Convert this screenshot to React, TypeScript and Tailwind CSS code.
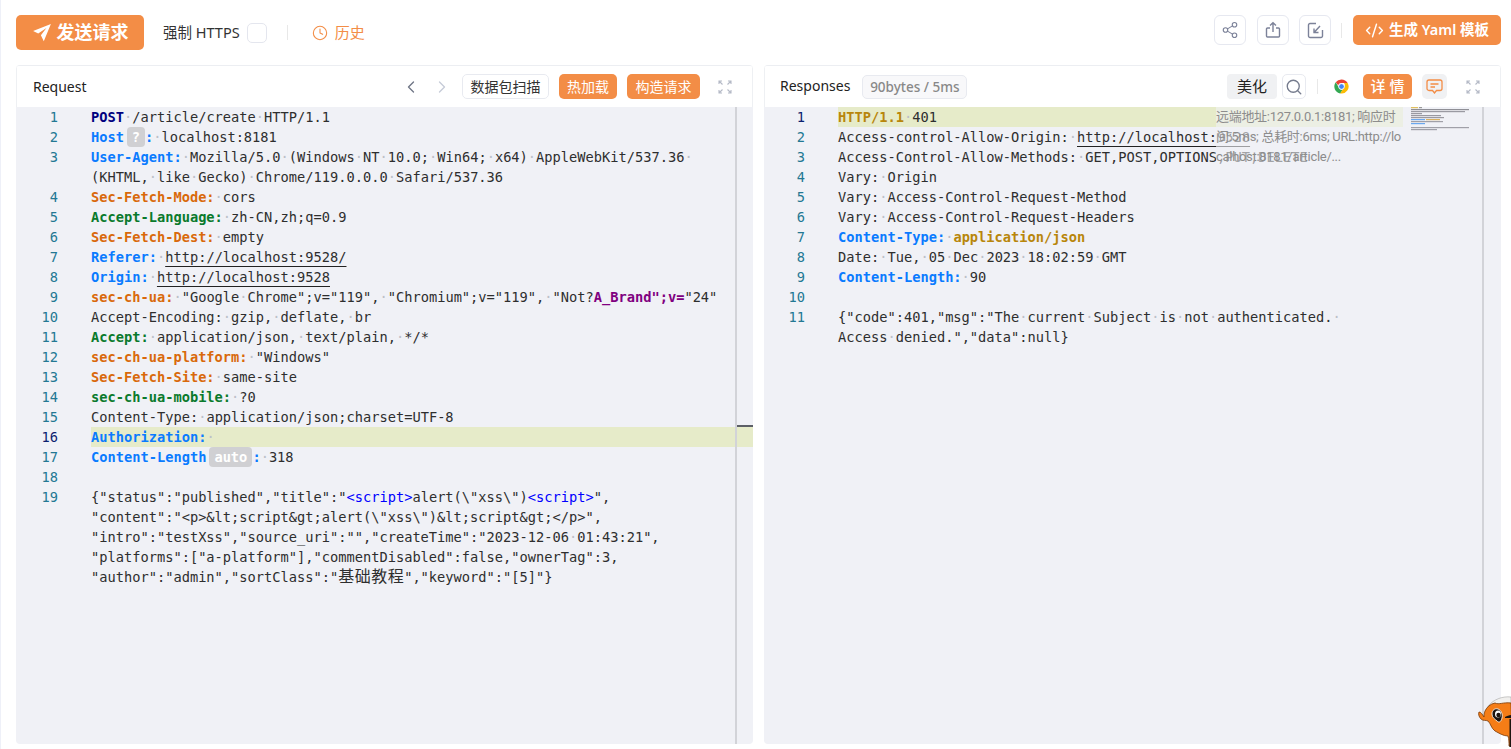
import React from "react";
import { ChevronLeft, ChevronRight, Share2, Search, Clock, CodeXml } from "lucide-react";

type Seg = [string, string?];
type Row = { n?: number; segs: Seg[]; active?: boolean };

const B = "text-[#0a7bff] font-bold";
const O = "text-[#d9690b] font-bold";
const G = "text-[#0a7a2c] font-bold";
const U = "underline underline-offset-[4px] decoration-[#222]";

const reqRows: Row[] = [
  { n: 1, segs: [["POST", "text-[#00007f] font-bold"], [" /article/create HTTP/1.1"]] },
  { n: 2, segs: [["Host", B], ["?", "badge"], [":", B], [" localhost:8181"]] },
  { n: 3, segs: [["User-Agent:", B], [" Mozilla/5.0 (Windows NT 10.0; Win64; x64) AppleWebKit/537.36 "]] },
  { segs: [["(KHTML, like Gecko) Chrome/119.0.0.0 Safari/537.36"]] },
  { n: 4, segs: [["Sec-Fetch-Mode:", O], [" cors"]] },
  { n: 5, segs: [["Accept-Language:", G], [" zh-CN,zh;q=0.9"]] },
  { n: 6, segs: [["Sec-Fetch-Dest:", O], [" empty"]] },
  { n: 7, segs: [["Referer:", B], [" "], ["http://localhost:9528/", U]] },
  { n: 8, segs: [["Origin:", B], [" "], ["http://localhost:9528", U]] },
  { n: 9, segs: [["sec-ch-ua:", O], [' "Google Chrome";v="119", "Chromium";v="119", "Not?'], ['A_Brand";v=', "text-[#800080] font-bold"], ['"24"']] },
  { n: 10, segs: [["Accept-Encoding: gzip, deflate, br"]] },
  { n: 11, segs: [["Accept:", G], [" application/json, text/plain, */*"]] },
  { n: 12, segs: [["sec-ch-ua-platform:", O], [' "Windows"']] },
  { n: 13, segs: [["Sec-Fetch-Site:", O], [" same-site"]] },
  { n: 14, segs: [["sec-ch-ua-mobile:", G], [" ?0"]] },
  { n: 15, segs: [["Content-Type: application/json;charset=UTF-8"]] },
  { n: 16, active: true, segs: [["Authorization:", B], [" "]] },
  { n: 17, segs: [["Content-Length", B], ["auto", "badge"], [":", B], [" 318"]] },
  { n: 18, segs: [] },
  { n: 19, segs: [['{"status":"published","title":"'], ["<script>", "text-[#0000ff]"], ['alert(\\"xss\\")'], ["<script>", "text-[#0000ff]"], ['",']] },
  { segs: [['"content":"<p>&lt;script&gt;alert(\\"xss\\")&lt;script&gt;</p>",']] },
  { segs: [['"intro":"testXss","source_uri":"","createTime":"2023-12-06 01:43:21",']] },
  { segs: [['"platforms":["a-platform"],"commentDisabled":false,"ownerTag":3,']] },
  { segs: [['"author":"admin","sortClass":"'], ["基础教程", "cjk"], ['","keyword":"[5]"}']] },
];

const resRows: Row[] = [
  { n: 1, active: true, segs: [["HTTP/1.1", "text-[#b8860b] font-bold"], [" 401"]] },
  { n: 2, segs: [["Access-control-Allow-Origin: "], ["http://localhost:9528", U]] },
  { n: 3, segs: [["Access-Control-Allow-Methods: GET,POST,OPTIONS,PUT,DELETE"]] },
  { n: 4, segs: [["Vary: Origin"]] },
  { n: 5, segs: [["Vary: Access-Control-Request-Method"]] },
  { n: 6, segs: [["Vary: Access-Control-Request-Headers"]] },
  { n: 7, segs: [["Content-Type:", B], [" "], ["application/json", "text-[#b8860b] font-bold"]] },
  { n: 8, segs: [["Date: Tue, 05 Dec 2023 18:02:59 GMT"]] },
  { n: 9, segs: [["Content-Length:", B], [" 90"]] },
  { n: 10, segs: [] },
  { n: 11, segs: [['{"code":401,"msg":"The current Subject is not authenticated. ']] },
  { segs: [['Access denied.","data":null}']] },
];

function SegView({ seg }: { seg: Seg }) {
  const [text, cls] = seg;
  if (cls === "badge") {
    return (
      <span
        className={`inline-block align-top ml-[3px] bg-[#d0d0d3] text-white font-bold rounded-[4px] text-center h-[20px] leading-[20px] ${
          text === "?" ? "w-[18px]" : "w-[43px]"
        }`}
      >
        {text}
      </span>
    );
  }
  if (cls === "cjk") {
    return <span className="text-[16px] tracking-[0.48px]">{text}</span>;
  }
  const parts = text.split(" ");
  return (
    <span className={cls}>
      {parts.map((p, i) => (
        <React.Fragment key={i}>
          {i > 0 && <span className="text-[#bcc0c8] font-normal no-underline">·</span>}
          {p}
        </React.Fragment>
      ))}
    </span>
  );
}

function Code({ rows, gutter, activeEnd }: { rows: Row[]; gutter: string; activeEnd: string }) {
  return (
    <div>
      {rows.map((r, i) => (
        <div key={i} className="flex h-[20px] leading-[20px]">
          <div className={`${gutter} shrink-0 text-right pr-[33px] ${r.active ? "text-[#0b216f]" : "text-[#237893]"}`}>
            {r.n ?? ""}
          </div>
          <div className={`flex-1 whitespace-pre ${r.active ? activeEnd : ""}`}>
            {r.segs.map((s, j) => (
              <SegView key={j} seg={s} />
            ))}
          </div>
        </div>
      ))}
    </div>
  );
}

function Expand() {
  return (
    <svg width="14" height="14" viewBox="0 0 14 14" fill="none" stroke="#b4b9c6" strokeWidth="1.1">
      <path d="M1 4V1h3M1 1l3.5 3.5M13 4V1h-3M13 1L9.5 4.5M1 10v3h3M1 13l3.5-3.5M13 10v3h-3M13 13L9.5 9.5" />
    </svg>
  );
}

function ChromeLogo() {
  return (
    <svg width="17" height="17" viewBox="0 0 48 48">
      <path fill="#ea4335" d="M24 4a20 20 0 0 1 17.3 10H24a10 10 0 0 0-9.4 6.6L7.7 12A20 20 0 0 1 24 4z" />
      <path fill="#34a853" d="M7.7 12l8.7 15a10 10 0 0 0 10.7 6.6L20.5 43.7A20 20 0 0 1 7.7 12z" />
      <path fill="#fbbc05" d="M41.3 14a20 20 0 0 1-20.8 29.7l8.6-15A10 10 0 0 0 31 14z" />
      <circle cx="24" cy="24" r="8" fill="#4285f4" stroke="#fff" strokeWidth="2.5" />
    </svg>
  );
}

function IconBox({ children }: { children: React.ReactNode }) {
  return (
    <div className="w-[32px] h-[30px] border border-[#e6e8f0] rounded-[6px] flex items-center justify-center text-[#7c8299]">
      {children}
    </div>
  );
}

const MONO = "[font-family:'DejaVu_Sans_Mono','Noto_Sans_CJK_SC',monospace] text-[13.7px] text-[#2e2e2e]";

const minimap: [number, number, number, string][] = [
  [0, 0, 7, "#e0c060"], [8, 0, 3, "#999"],
  [0, 2, 58, "#8f8f96"], [0, 4, 54, "#9a9aa2"], [0, 6, 11, "#9a9aa2"], [0, 8, 30, "#9a9aa2"],
  [0, 10, 33, "#9a9aa2"], [0, 12, 14, "#6aa8f0"], [15, 12, 14, "#d8b060"],
  [0, 14, 32, "#a0a0a8"], [0, 16, 14, "#6aa8f0"],
  [0, 20, 58, "#a0a0a8"], [0, 22, 26, "#a0a0a8"],
];

export default function App() {
  return (
    <div className="h-[749px] bg-white relative overflow-hidden border-l border-[#eef0f8] flex flex-col [font-family:'Noto_Sans','Noto_Sans_CJK_SC',sans-serif]">
      {/* top bar */}
      <div className="h-[65px] shrink-0 pl-[15px] pr-[10px] pt-[15px] flex items-start justify-between">
        <div className="flex items-center h-[35px]">
          <button className="w-[128px] h-[35px] rounded-[5px] bg-[#f38d46] text-white font-bold text-[18px] flex items-center justify-center gap-[5px]">
            <svg width="20" height="20" viewBox="0 0 18 18" fill="#fff">
              <path d="M17 1L1 7.2l4.6 2.3L13 4.5 8 11l2.6 5.5z" />
            </svg>
            发送请求
          </button>
          <span className="ml-[19px] text-[14.5px] text-[#333]">强制 HTTPS</span>
          <span className="ml-[7px] w-[20px] h-[20px] rounded-[5px] border border-[#e4e6ee] bg-white" />
          <span className="ml-[20px] w-px h-[15px] bg-[#e8e8e8]" />
          <span className="ml-[24px] flex items-center gap-[7px] text-[15px] text-[#f38d46]">
            <Clock size={16} strokeWidth={1.6} />
            历史
          </span>
        </div>
        <div className="flex items-center h-[30px]">
          <IconBox>
            <Share2 size={18} strokeWidth={1.5} />
          </IconBox>
          <div className="ml-[11px]">
            <IconBox>
              <svg width="18" height="18" viewBox="0 0 18 18" fill="none" stroke="currentColor" strokeWidth="1.4">
                <path d="M6 7H3.5A1 1 0 0 0 2.5 8v7a1 1 0 0 0 1 1h11a1 1 0 0 0 1-1V8a1 1 0 0 0-1-1H12M9 11V2M6 4.5L9 1.8l3 2.7" />
              </svg>
            </IconBox>
          </div>
          <div className="ml-[10px]">
            <IconBox>
              <svg width="17" height="17" viewBox="0 0 17 17" fill="none" stroke="currentColor" strokeWidth="1.4">
                <path d="M9 1.5H3a1.5 1.5 0 0 0-1.5 1.5v11A1.5 1.5 0 0 0 3 15.5h11a1.5 1.5 0 0 0 1.5-1.5V8M13 4l-5.5 6M7 6.5V10.5h4.5" />
              </svg>
            </IconBox>
          </div>
          <span className="ml-[10px] w-px h-[15px] bg-[#e8e8e8]" />
          <button className="ml-[11px] w-[148px] h-[30px] rounded-[5px] bg-[#f38d46] text-white font-semibold text-[14.5px] flex items-center justify-center gap-[5px]">
            <CodeXml size={19} strokeWidth={1.8} />
            生成 Yaml 模板
          </button>
        </div>
      </div>

      {/* panels */}
      <div className="flex-1 min-h-0 pl-[15px] pr-[10px] pb-[5px] flex gap-[11px]">
        {/* Request */}
        <div className="w-[737px] flex flex-col border-t border-[#eceef2] relative overflow-hidden rounded-[4px]">
          <div className="h-[41px] shrink-0 bg-white border-x border-[#eef0f3] flex items-center pl-[16px] text-[14px] text-[#222]">
            <span>Request</span>
            <div className="ml-auto flex items-center">
              <ChevronLeft size={20} strokeWidth={1.6} className="text-[#6f7686]" />
              <ChevronRight size={20} strokeWidth={1.6} className="ml-[11px] text-[#c6cbd8]" />
              <span className="ml-[10px] w-[87px] h-[25px] border border-[#e8eaf0] rounded-[5px] flex items-center justify-center text-[14px] text-[#333]">
                数据包扫描
              </span>
              <span className="ml-[10px] w-[58px] h-[25px] rounded-[5px] bg-[#f38d46] text-white flex items-center justify-center text-[14px]">
                热加载
              </span>
              <span className="ml-[10px] w-[73px] h-[25px] rounded-[5px] bg-[#f38d46] text-white flex items-center justify-center text-[14px]">
                构造请求
              </span>
              <span className="ml-[18px] mr-[20px] flex">
                <Expand />
              </span>
            </div>
          </div>
          <div className={`flex-1 bg-[#f0f1f6] ${MONO}`}>
            <Code rows={reqRows} gutter="w-[75px]" activeEnd="bg-[#e6ebc9]" />
          </div>
          {/* ruler overlay */}
          <div className="absolute left-[719px] top-[41px] bottom-0 w-[2px] bg-[#d2d3d8]" />
          <div className="absolute left-[721px] top-[359px] w-[16px] h-[2px] bg-[#5c5f66]" />
        </div>

        {/* Responses */}
        <div className="w-[737px] flex flex-col border-t border-[#eceef2] relative overflow-hidden rounded-[4px]">
          <div className="h-[41px] shrink-0 bg-white border-x border-[#eef0f3] flex items-center pl-[15px] text-[14px] text-[#222]">
            <span className="mb-[2px]">Responses</span>
            <span className="ml-[12px] mt-[1px] w-[105px] h-[24px] border border-[#e8eaf0] bg-[#f8f8fa] rounded-[5px] flex items-center justify-center text-[13.5px] font-medium text-[#888]">
              90bytes / 5ms
            </span>
            <div className="ml-auto flex items-center">
              <span className="w-[50px] h-[25px] rounded-[4px] bg-[#f0f1f3] flex items-center justify-center text-[15px] text-[#222]">
                美化
              </span>
              <span className="ml-[5px] w-[24px] h-[25px] border border-[#e8eaf0] rounded-[5px] flex items-center justify-center text-[#767c8e]">
                <Search size={18} strokeWidth={1.8} />
              </span>
              <span className="ml-[11px] w-px h-[15px] bg-[#e8e8e8]" />
              <span className="ml-[15px] flex">
                <ChromeLogo />
              </span>
              <span className="ml-[13px] w-[49px] h-[25px] rounded-[5px] bg-[#f38d46] text-white font-medium flex items-center justify-center text-[15px]">
                详 情
              </span>
              <span className="ml-[10px] w-[25px] h-[25px] rounded-[5px] bg-[#f0f1f3] flex items-center justify-center">
                <svg width="17" height="15" viewBox="0 0 17 15" fill="none" stroke="#f38d46" strokeWidth="1.3">
                  <path d="M3 1h11a2 2 0 0 1 2 2v6.5a2 2 0 0 1-2 2h-3.5L8.5 14l-2-2.5H3a2 2 0 0 1-2-2V3a2 2 0 0 1 2-2zM4.5 5h8M4.5 8h4.5" />
                </svg>
              </span>
              <span className="ml-[19px] mr-[20px] flex">
                <Expand />
              </span>
            </div>
          </div>
          <div className={`flex-1 bg-[#f0f1f6] ${MONO}`}>
            <div className="w-[639px]">
              <Code rows={resRows} gutter="w-[74px]" activeEnd="bg-[#e6ebc9]" />
            </div>
          </div>
          {/* hover tooltip over the code */}
          <div className="absolute left-[452px] top-[41px] w-[187px] h-[60px] bg-[#f0f1f6]/60 [font-family:Roboto,'Noto_Sans_CJK_SC',sans-serif] text-[13px] tracking-[-0.3px] leading-[20px] text-[#8c8c8c] break-all">
            远端地址:127.0.0.1:8181; 响应时间:5ms; 总耗时:6ms; URL:http://localhost:8181/article/...
          </div>
          {/* minimap */}
          <svg className="absolute left-[647px] top-[41px] blur-[0.5px]" width="60" height="26" viewBox="0 0 60 26">
            {minimap.map(([x, y, w, c], i) => (
              <rect key={i} x={x} y={y} width={w} height="1.2" fill={c} />
            ))}
          </svg>
          <div className="absolute left-[718px] top-[41px] bottom-0 w-[2px] bg-[#d2d3d8]" />
        </div>
      </div>

      {/* mascot */}
      <svg className="absolute right-0 bottom-0" width="33" height="54" viewBox="0 0 33 54">
        <path d="M10 11C16 4 25 1 33 2V20H12z" fill="#f1f0ee" stroke="#999" strokeWidth="0.5" />
        <path d="M33 8c-8-1-12 2-16 0-5 1-8 4-10 8-1 3-1 4-1 6-2-3-3-5-5-5-1 2 0 5 2 7s5 1 7 2c3 3 3 7 7 10 4 2 8 5 13 5 1 3 1 7 1 10h3z" fill="#f57d17" stroke="#7a3a08" strokeWidth="0.8" />
        <path d="M14 19c0-4 3-6 6-5s5 5 4 9-3 5-5 3-5-3-5-7z" fill="#1d1510" stroke="#fff" strokeWidth="0.8" />
        <ellipse cx="20" cy="19" rx="3" ry="3.6" fill="#fff" />
        <circle cx="20.5" cy="20" r="2.2" fill="#1d1510" />
        <path d="M27 22c2-1 4-2 6-2v3h-6z" fill="#1d1510" />
        <path d="M31.5 24h1.5v28h-1.5z" fill="#1d1510" />
      </svg>
    </div>
  );
}
